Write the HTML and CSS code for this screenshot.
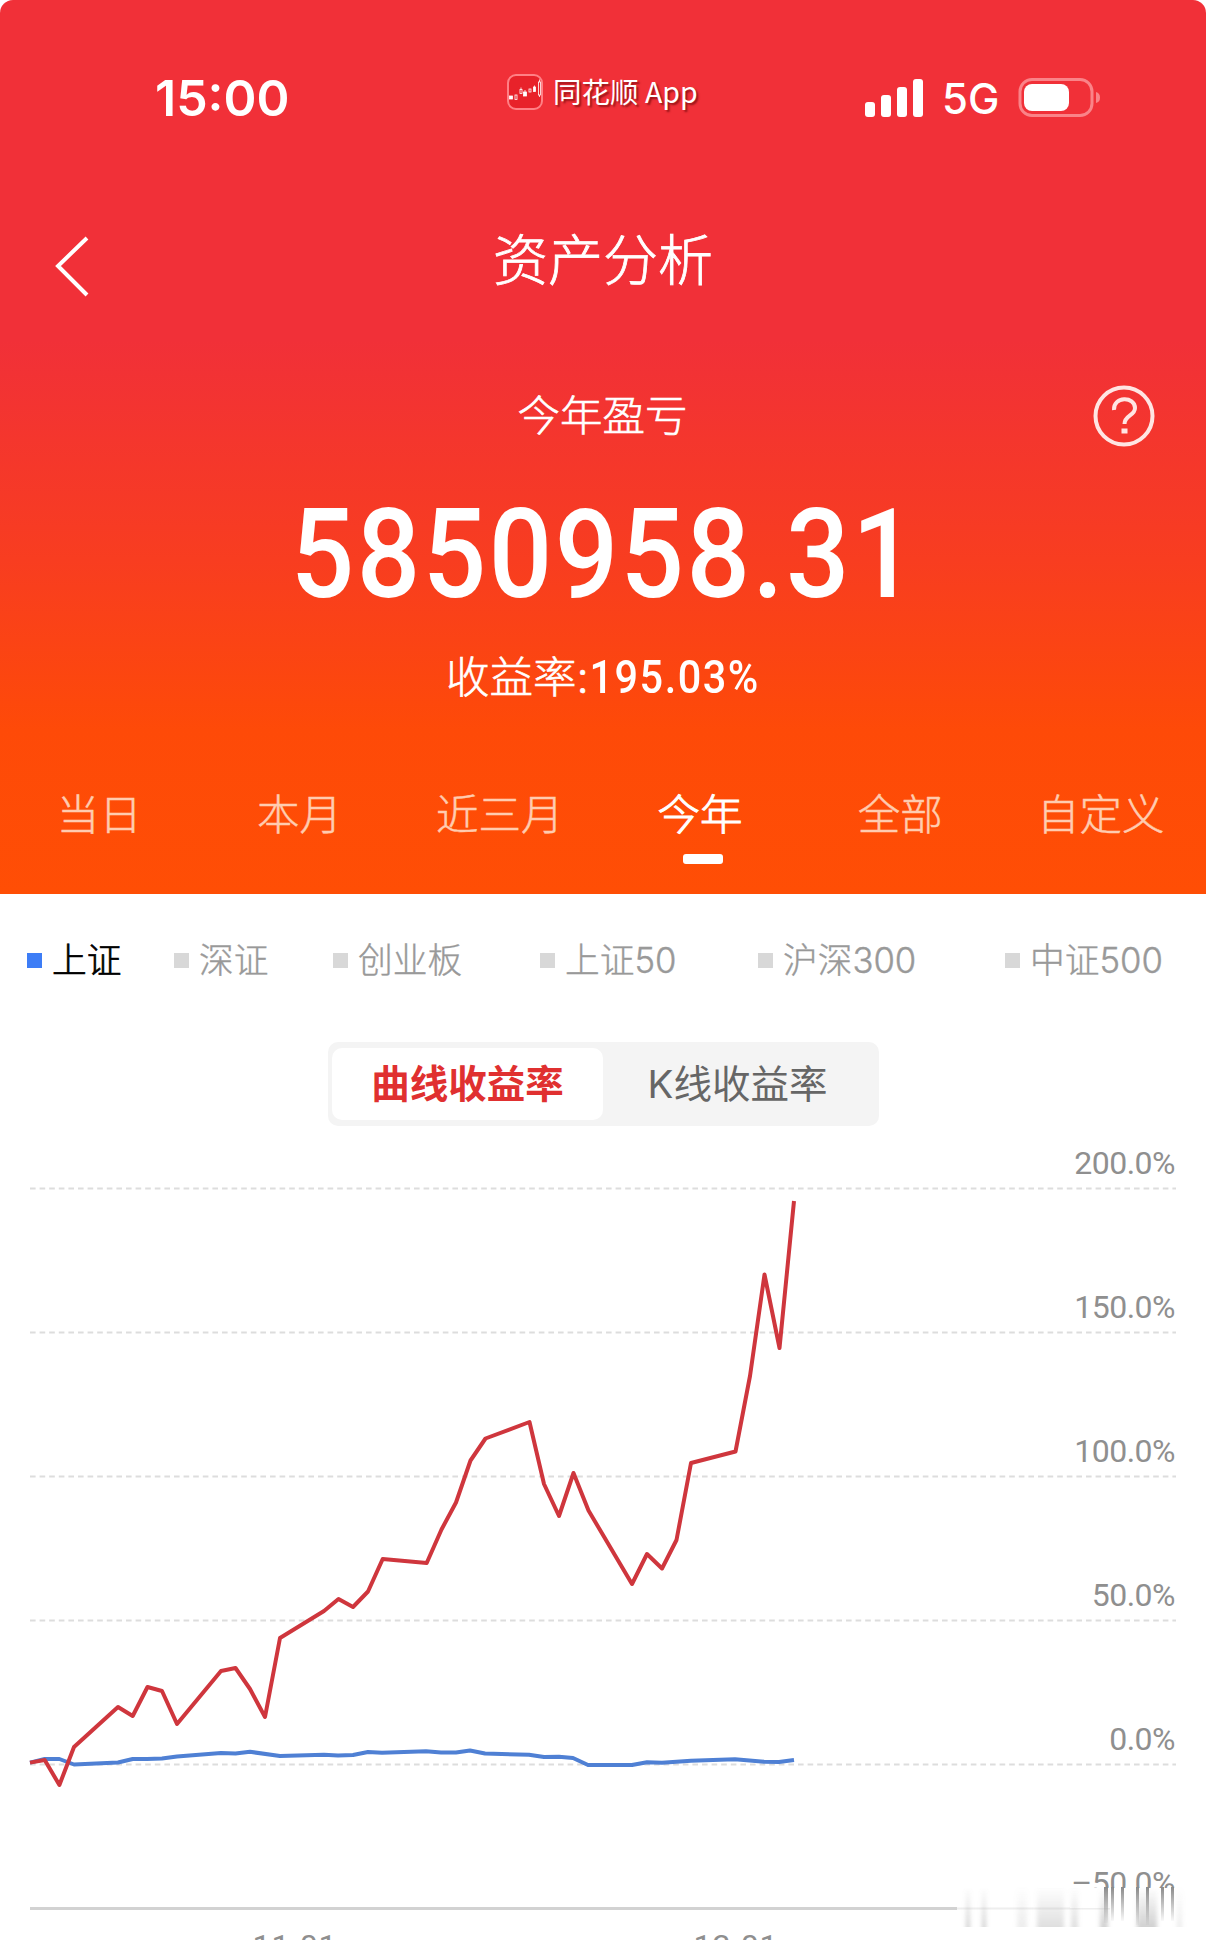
FILE: index.html
```html
<!DOCTYPE html>
<html lang="zh-CN">
<head>
  <meta charset="UTF-8">
  <meta name="viewport" content="width=device-width, initial-scale=1.0">
  <title>资产分析</title>
  <link rel="stylesheet" href="styles.css">
</head>
<body>
  <header class="header">
    <div class="status-bar">
      <div class="time">15:00</div>
      <div class="app-tag">
        <svg class="app-icon" width="36" height="36" viewBox="0 0 36 36">
          <rect x="1" y="1" width="34" height="34" rx="8" fill="#e8222a" stroke="#ff8085" stroke-width="2"/>
          <g fill="#fff" stroke="#fff" stroke-width="0.800">
            <rect x="2.500" y="22" width="3" height="3"/>
            <rect x="8" y="21" width="2" height="4.500" fill="none"/>
            <rect x="13" y="15.500" width="2" height="4" fill="none"/>
            <rect x="16.500" y="18" width="3" height="4"/>
            <rect x="22" y="15" width="2" height="3" fill="none"/>
            <rect x="26.500" y="13" width="2" height="4.500"/>
            <rect x="31.500" y="8" width="2" height="13" fill="none"/>
            <path d="M14 13.500v2M18 16v2M27.500 11.500v2M32.500 5.500v2.500M32.500 21v2"/>
          </g>
        </svg>
        <span class="app-name">同花顺 App</span>
      </div>
      <svg class="signal" width="59" height="38" viewBox="0 0 59 38" fill="#fff">
        <rect x="0" y="23" width="10" height="15" rx="3"/>
        <rect x="16" y="16" width="10" height="22" rx="3"/>
        <rect x="32" y="8" width="10" height="30" rx="3"/>
        <rect x="48" y="0" width="10" height="38" rx="3"/>
      </svg>
      <span class="network">5G</span>
      <svg class="battery" width="84" height="40" viewBox="0 0 84 40">
        <rect x="2" y="1.500" width="72" height="36" rx="12" fill="none" stroke="#fa8388" stroke-width="3"/>
        <rect x="6" y="6" width="45" height="27" rx="8" fill="#fff"/>
        <path d="M78 14q4 1 4 5.500t-4 5.500z" fill="#fa8388"/>
      </svg>
    </div>

    <div class="nav">
      <svg class="back" width="40" height="64" viewBox="0 0 40 64">
        <path d="M35 4L6 32L35 61" fill="none" stroke="#fff" stroke-width="4"/>
      </svg>
      <h1 class="title">资产分析</h1>
    </div>

    <div class="summary">
      <div class="label-row">
        <span class="label">今年盈亏</span>
        <svg class="help" width="62" height="62" viewBox="0 0 62 62" fill="none" stroke="#ffe5e3" stroke-width="4">
          <circle cx="31" cy="31" r="28.500"/>
          <path d="M21 25C20 11 42 11 42 23C42 31 31.500 30 31.500 39"/>
          <rect x="28.500" y="43.500" width="6" height="5" fill="#ffe5e3" stroke="none"/>
        </svg>
      </div>
      <div class="amount"><span class="amount-value">5850958.31</span></div>
      <div class="rate">收益率:<span class="rate-value">195.03%</span></div>
    </div>

    <nav class="tabs">
      <a class="tab">当日</a>
      <a class="tab">本月</a>
      <a class="tab">近三月</a>
      <a class="tab active">今年</a>
      <a class="tab">全部</a>
      <a class="tab">自定义</a>
    </nav>
  </header>

  <main>
    <div class="legend">
      <span class="index selected">上证</span>
      <span class="index">深证</span>
      <span class="index">创业板</span>
      <span class="index">上证50</span>
      <span class="index">沪深300</span>
      <span class="index">中证500</span>
    </div>

    <div class="switch">
      <span class="option on">曲线收益率</span>
      <span class="option">K线收益率</span>
    </div>

    <svg class="chart" width="1206" height="814" viewBox="0 1126 1206 814">
      <defs>
        <linearGradient id="fade" x1="0" y1="0" x2="0" y2="1">
          <stop offset="0" stop-color="#999" stop-opacity="0"/>
          <stop offset="1" stop-color="#999" stop-opacity="0.450"/>
        </linearGradient>
        <linearGradient id="drip" x1="0" y1="0" x2="0" y2="1">
          <stop offset="0" stop-color="#8a8a8a"/>
          <stop offset="1" stop-color="#8a8a8a" stop-opacity="0.050"/>
        </linearGradient>
        <filter id="soft" x="-5%" width="110%" y="0" height="100%">
          <feGaussianBlur stdDeviation="2 0"/>
        </filter>
      </defs>

      <!-- grid -->
      <g class="grid">
        <path d="M30 1188.500H1176M30 1332.500H1176M30 1476.500H1176M30 1620.500H1176M30 1764.500H1176"/>
      </g>
      <path class="axis" d="M30 1908.500H957"/>
      <path class="axis faint" d="M957 1908.500H1110"/>

      <g class="y-labels">
        <text x="1175" y="1174">200.0%</text>
        <text x="1175" y="1318">150.0%</text>
        <text x="1175" y="1462">100.0%</text>
        <text x="1175" y="1606">50.0%</text>
        <text x="1175" y="1750">0.0%</text>
        <text x="1175" y="1894">–50.0%</text>
      </g>
      <g class="x-labels">
        <text x="295" y="1957">11-01</text>
        <text x="736" y="1957">12-01</text>
      </g>

      <!-- smeared corner -->
      <rect x="1070" y="1888" width="115" height="20" fill="#fff"/>
      <g fill="url(#fade)" filter="url(#soft)">
        <rect x="966" y="1887" width="4" height="40"/>
        <rect x="982" y="1887" width="4" height="40"/>
        <rect x="1017" y="1887" width="10" height="40" opacity="0.400"/>
        <rect x="1037" y="1887" width="27" height="40" opacity="0.700"/>
        <rect x="1071" y="1887" width="7" height="40" opacity="0.700"/>
        <rect x="1100" y="1887" width="8" height="40"/>
        <rect x="1137" y="1887" width="20" height="40"/>
        <rect x="1177" y="1887" width="5" height="40" opacity="0.400"/>
      </g>
      <g fill="url(#drip)">
        <rect x="1104" y="1887" width="4" height="36"/>
        <rect x="1111" y="1887" width="3" height="34"/>
        <rect x="1121" y="1887" width="3" height="34"/>
        <rect x="1136" y="1887" width="3" height="38"/>
        <rect x="1146" y="1887" width="3" height="38"/>
        <rect x="1161" y="1887" width="3" height="34"/>
        <rect x="1171" y="1887" width="3" height="34"/>
      </g>

      <polyline class="line blue" points="30,1762.600 44.700,1759 59.400,1759 74,1764.500 118,1762.500 132.700,1759 147,1759 162,1758.500 177,1756.500 221,1753 235.500,1753.500 250,1751.800 280,1756 324,1754.800 338,1755.500 353,1755 368,1752 382,1752.800 426,1751.200 441,1752.500 456,1752.500 470,1750.500 485,1753.500 529,1754.800 544,1757 559,1756.700 573,1758 588,1765 632,1765 647,1762.200 662,1762.800 691,1760.800 735,1759.200 764,1761.800 779,1762 794,1760"/>
      <polyline class="line red" points="30,1762.600 44.700,1760 59.400,1785 74,1747 118,1707 132.700,1716 147.500,1687 162,1691 177,1724 221,1671 235.500,1668 250,1689 265,1717 280,1638 324,1611 338.500,1599 353,1607 368,1591.500 382.700,1559 426.700,1563 441.500,1529.500 456,1502.500 470.500,1460.500 485.500,1438.500 529.500,1422 544,1484 559,1516 573.500,1473 588.500,1510.500 632,1584 647,1554 662,1568.500 676.500,1540 691,1463 735.500,1451.500 750,1376 764.500,1274.500 779.500,1348 794,1201"/>
    </svg>
  </main>
</body>
</html>
```
FILE: styles.css
```css
* {
  box-sizing: border-box;
}
body {
  margin: 0;
  width: 1206px;
  height: 1940px;
  overflow: hidden;
  background: #fff;
  font-family: Inter, "Noto Sans CJK SC", sans-serif;
}
svg {
  display: block;
  flex: none;
}

/* Red header */
.header {
  height: 894px;
  color: #fff;
  border-radius: 13px 13px 0 0;
  background: linear-gradient(#f13038 0, #f13038 340px, #f83d20 560px, #fe4a08 730px, #ff4e05 894px);
}
.status-bar {
  display: flex;
  align-items: center;
  height: 196px;
  padding-left: 155px;
}
.time {
  width: 352px;
  font-size: 50px;
  font-weight: 600;
}
.app-tag {
  display: flex;
  align-items: center;
  gap: 10px;
  width: 358px;
  padding-bottom: 12px;
}
.app-name {
  padding-bottom: 2px;
  font-family: "Noto Sans CJK SC", sans-serif;
  font-size: 28.5px;
  line-height: 34px;
  white-space: nowrap;
  text-shadow: 2px 2px 2px rgba(90, 0, 0, 0.6);
}
.network {
  width: 76px;
  margin-left: 18px;
  font-size: 42px;
  font-weight: 500;
}
.nav {
  display: grid;
  grid-template-columns: 120px 1fr 120px;
  align-items: center;
  height: 132px;
}
.back {
  margin: 8px 0 0 52px;
}
.title {
  margin: 0;
  padding-bottom: 12px;
  text-align: center;
  font-size: 55px;
  font-weight: 300;
  -webkit-text-stroke: 0.8px #fff;
}
.summary {
  padding-top: 58px;
  text-align: center;
}
.label-row {
  display: grid;
  grid-template-columns: 150px 1fr 150px;
  grid-template-rows: 60px;
  align-items: center;
  height: 60px;
}
.label {
  grid-column: 2;
  padding-right: 1px;
  line-height: 60px;
  font-size: 42.5px;
  font-weight: 300;
  -webkit-text-stroke: 0.6px #fff;
}
.help {
  margin-left: 37px;
}
.amount {
  height: 100px;
  margin-top: 59px;
  padding-left: 3px;
  line-height: 100px;
}
.amount-value {
  display: inline-block;
  font-family: Roboto, sans-serif;
  font-size: 124px;
  font-weight: 500;
  letter-spacing: 2.8px;
  transform: scaleX(0.9);
}
.rate {
  height: 60px;
  margin-top: 42px;
  line-height: 60px;
  font-size: 43.5px;
  font-weight: 300;
  -webkit-text-stroke: 0.6px #fff;
}
.rate-value {
  display: inline-block;
  margin: 0 -9px;
  font-family: Roboto, sans-serif;
  font-size: 46px;
  font-weight: 500;
  letter-spacing: 1.7px;
  transform: scaleX(0.9);
  -webkit-text-stroke: 0;
}
.tabs {
  display: grid;
  grid-template-columns: repeat(6, 200.3px);
  margin: 78px 0 0 -1px;
}
.tab {
  line-height: 60px;
  text-align: center;
  font-size: 42.5px;
  font-weight: 300;
  color: #ffccb0;
  -webkit-text-stroke: 0.5px #ffccb0;
}
.tab.active {
  color: #fff;
  -webkit-text-stroke: 1px #fff;
}
.tab.active::after {
  content: "";
  display: block;
  width: 40px;
  height: 10px;
  margin: 9px 0 0 83px;
  border-radius: 3px;
  background: #fff;
}

/* Index legend */
.legend {
  display: grid;
  grid-template-columns: 147px 159px 207px 218px 247px 1fr;
  padding: 41px 0 0 27px;
}
.index {
  display: flex;
  align-items: center;
  gap: 10px;
  line-height: 50px;
  font-size: 34.7px;
  font-weight: 300;
  color: #999;
  white-space: nowrap;
  -webkit-text-stroke: 0.4px #999;
}
.index::before {
  content: "";
  width: 15px;
  height: 15px;
  background: #d8d8d8;
}
.index.selected {
  color: #000;
  -webkit-text-stroke: 0.7px #000;
}
.index.selected::before {
  background: #3d7df6;
}

/* Curve / candlestick switch */
.switch {
  display: grid;
  grid-template-columns: 271px 1fr;
  width: 551px;
  height: 84px;
  margin: 57px 0 0 328px;
  padding: 6px 4px;
  border-radius: 10px;
  background: #f4f4f4;
}
.option {
  padding-right: 3px;
  line-height: 72px;
  text-align: center;
  font-size: 38.5px;
  color: #666;
}
.option.on {
  padding-right: 0;
  border-radius: 10px;
  background: #fff;
  font-weight: 700;
  color: #e03030;
}

/* Chart */
.grid path {
  fill: none;
  stroke: #ddd;
  stroke-width: 2;
  stroke-dasharray: 5.600 4;
}
.axis {
  stroke: #d2d2d2;
  stroke-width: 3;
}
.axis.faint {
  stroke: #eee;
  stroke-width: 2;
}
.y-labels,
.x-labels {
  font-family: Roboto, sans-serif;
  font-size: 32px;
  fill: #8f8f8f;
}
.y-labels {
  text-anchor: end;
  letter-spacing: -0.5px;
}
.x-labels {
  text-anchor: middle;
  letter-spacing: 0.8px;
}
.line {
  fill: none;
  stroke-width: 4;
  stroke-linejoin: round;
}
.blue {
  stroke: #4f80d4;
}
.red {
  stroke: #cf363d;
}
```
